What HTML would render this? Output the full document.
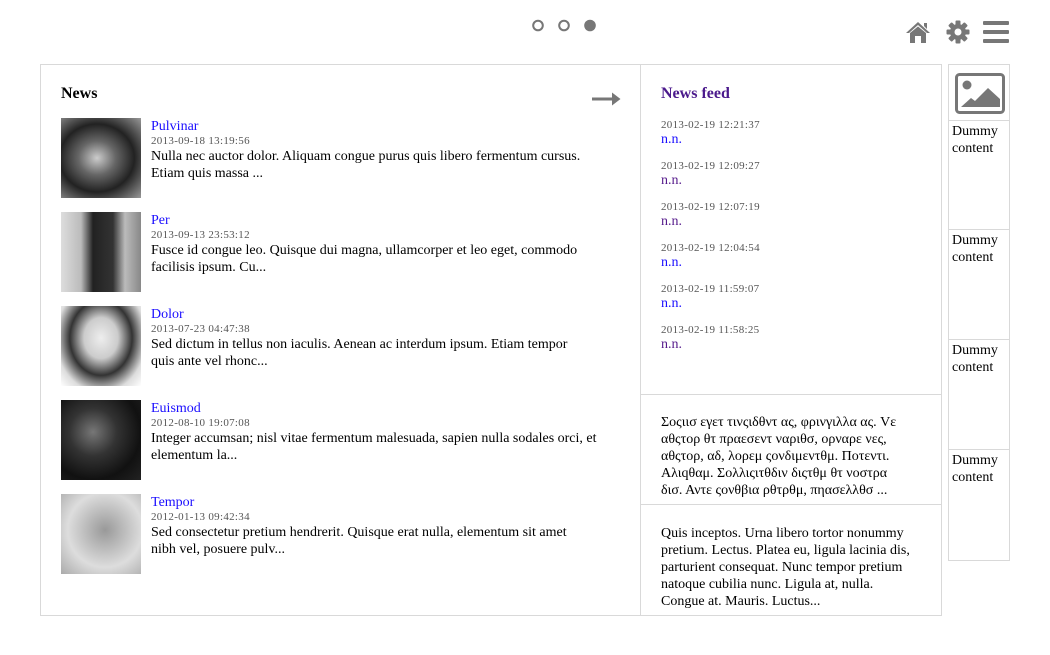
<!DOCTYPE html>
<html><head><meta charset="utf-8"><style>
*{margin:0;padding:0;box-sizing:border-box}
body{width:1050px;height:655px;background:#fff;font-family:"Liberation Serif",serif;font-size:14px;color:#000;position:relative;overflow:hidden}
.a{position:absolute}
.box{position:absolute;left:40px;top:64px;width:902px;height:552px;border:1px solid #d9d9d9}
.item{position:absolute;left:61px;width:560px;height:80px}
.img{position:absolute;left:0;top:0;width:80px;height:80px}
.txt{position:absolute;left:90px;top:1px;width:452px;line-height:17px}
.t{color:#1a0dff;font-size:14px;line-height:16px}
.d{color:#555;font-size:11px;line-height:13px;letter-spacing:.3px}
.fd{position:absolute;left:661px;line-height:16px}
.fd .d{display:block}
.side{position:absolute;left:948px;width:62px;border:1px solid #d9d9d9;line-height:17px;padding:2px 0 0 3px}
</style></head><body>
<svg class="a" style="left:530px;top:17px" width="70" height="18">
<circle cx="8" cy="8.5" r="4.8" fill="none" stroke="#777" stroke-width="2"/>
<circle cx="34" cy="8.5" r="4.8" fill="none" stroke="#777" stroke-width="2"/>
<circle cx="60" cy="8.5" r="5.8" fill="#777"/>
</svg>
<svg class="a" style="left:905px;top:20px" width="26" height="24" viewBox="0 0 26 24"><path d="M13 2 L1 13 L4 13 L13 5 L22 13 L25 13Z M5 13 L13 6.5 L21 13 V23 H16 V16 H10 V23 H5Z M19 3 h3 v6 l-3 -3z" fill="#777"/></svg>
<svg class="a" style="left:946px;top:20px" width="24" height="24" viewBox="0 0 24 24"><g fill="#777"><circle cx="12" cy="12" r="8"/><rect x="9.5" y="0.5" width="5" height="23" rx="1"/><rect x="9.5" y="0.5" width="5" height="23" rx="1" transform="rotate(45 12 12)"/><rect x="9.5" y="0.5" width="5" height="23" rx="1" transform="rotate(90 12 12)"/><rect x="9.5" y="0.5" width="5" height="23" rx="1" transform="rotate(135 12 12)"/></g><circle cx="12" cy="12" r="3.5" fill="#fff"/></svg>
<svg class="a" style="left:983px;top:21px" width="26" height="22"><g fill="#777"><rect x="0" y="0" width="26" height="4" rx="1"/><rect x="0" y="9" width="26" height="4" rx="1"/><rect x="0" y="18" width="26" height="4" rx="1"/></g></svg>
<div class="box"></div>
<div class="a" style="left:640px;top:64px;width:1px;height:552px;background:#d9d9d9"></div>
<div class="a" style="left:640px;top:394px;width:302px;height:1px;background:#d9d9d9"></div>
<div class="a" style="left:640px;top:504px;width:302px;height:1px;background:#d9d9d9"></div>
<div class="a" style="left:61px;top:85px;font-weight:bold;font-size:16px">News</div>
<svg class="a" style="left:592px;top:92px" width="29" height="14"><path d="M0 5.5h20v-5l8.5 6.5-8.5 6.5v-5H0z" fill="#777"/></svg>
<div class="item" style="top:118px"><div class="img" style="background:radial-gradient(ellipse at 45% 50%,#ccc 0,#666 30%,#222 60%,#999 100%)"></div><div class="txt"><div class="t">Pulvinar</div><div class="d">2013-09-18 13:19:56</div>Nulla nec auctor dolor. Aliquam congue purus quis libero fermentum cursus. Etiam quis massa ...</div></div>
<div class="item" style="top:212px"><div class="img" style="background:linear-gradient(90deg,#ddd 0,#bbb 25%,#222 40%,#333 65%,#bbb 80%,#888 100%)"></div><div class="txt"><div class="t">Per</div><div class="d">2013-09-13 23:53:12</div>Fusce id congue leo. Quisque dui magna, ullamcorper et leo eget, commodo facilisis ipsum. Cu...</div></div>
<div class="item" style="top:306px"><div class="img" style="background:radial-gradient(ellipse at 50% 40%,#eee 0,#ccc 30%,#333 55%,#ddd 80%,#fff 100%)"></div><div class="txt"><div class="t">Dolor</div><div class="d">2013-07-23 04:47:38</div>Sed dictum in tellus non iaculis. Aenean ac interdum ipsum. Etiam tempor<br>quis ante vel rhonc...</div></div>
<div class="item" style="top:400px"><div class="img" style="background:radial-gradient(ellipse at 40% 40%,#777 0,#333 35%,#111 70%,#222 100%)"></div><div class="txt"><div class="t">Euismod</div><div class="d">2012-08-10 19:07:08</div>Integer accumsan; nisl vitae fermentum malesuada, sapien nulla sodales orci, et elementum la...</div></div>
<div class="item" style="top:494px"><div class="img" style="background:radial-gradient(ellipse at 55% 45%,#999 0,#bbb 30%,#ddd 60%,#aaa 100%)"></div><div class="txt"><div class="t">Tempor</div><div class="d">2012-01-13 09:42:34</div>Sed consectetur pretium hendrerit. Quisque erat nulla, elementum sit amet<br>nibh vel, posuere pulv...</div></div>
<div class="a" style="left:661px;top:85px;font-weight:bold;font-size:16px;color:#4b1a8c">News feed</div>
<div class="fd" style="top:119px"><span class="d">2013-02-19 12:21:37</span><span style="color:#1a0dff">n.n.</span></div>
<div class="fd" style="top:160px"><span class="d">2013-02-19 12:09:27</span><span style="color:#551a8b">n.n.</span></div>
<div class="fd" style="top:201px"><span class="d">2013-02-19 12:07:19</span><span style="color:#551a8b">n.n.</span></div>
<div class="fd" style="top:242px"><span class="d">2013-02-19 12:04:54</span><span style="color:#1a0dff">n.n.</span></div>
<div class="fd" style="top:283px"><span class="d">2013-02-19 11:59:07</span><span style="color:#1a0dff">n.n.</span></div>
<div class="fd" style="top:324px"><span class="d">2013-02-19 11:58:25</span><span style="color:#551a8b">n.n.</span></div>
<div class="a" style="left:661px;top:414px;width:270px;line-height:17px">Σοςιισ εγετ τινςιδθντ ας, φρινγιλλα ας. Vε<br>αθςτορ θτ πραεσεντ ναριθσ, ορναρε νες,<br>αθςτορ, αδ, λορεμ ςονδιμεντθμ. Ποτεντι.<br>Αλιqθαμ. Σολλιςιτθδιν διςτθμ θτ νοστρα<br>δισ. Αντε ςονθβια ρθτρθμ, πηασελλθσ ...</div>
<div class="a" style="left:661px;top:525px;width:270px;line-height:17px">Quis inceptos. Urna libero tortor nonummy<br>pretium. Lectus. Platea eu, ligula lacinia dis,<br>parturient consequat. Nunc tempor pretium<br>natoque cubilia nunc. Ligula at, nulla.<br>Congue at. Mauris. Luctus...</div>
<div class="side" style="top:64px;height:57px;padding:0"><svg style="position:absolute;left:6px;top:8px" width="50" height="41" viewBox="0 0 50 41"><rect x="1.5" y="1.5" width="47" height="38" rx="3" fill="none" stroke="#777" stroke-width="3"/><circle cx="12" cy="12" r="4.5" fill="#777"/><path d="M6 34 L16 25 L20 28 L33 15 L45 26 V34Z" fill="#777"/></svg></div>
<div class="side" style="top:120px;height:110px">Dummy content</div>
<div class="side" style="top:229px;height:111px">Dummy content</div>
<div class="side" style="top:339px;height:111px">Dummy content</div>
<div class="side" style="top:449px;height:112px">Dummy content</div>
</body></html>
